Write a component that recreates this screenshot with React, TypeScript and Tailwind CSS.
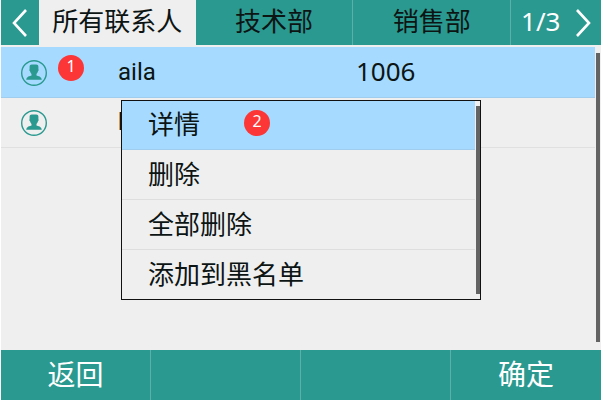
import clsx from "clsx";

const tabs = ["所有联系人", "技术部", "销售部"];

const contacts = [
  { name: "aila", number: "1006", badge: 1 },
  { name: "b", number: "", badge: null },
];

const actions = [
  { label: "详情", badge: 2 },
  { label: "删除", badge: null },
  { label: "全部删除", badge: null },
  { label: "添加到黑名单", badge: null },
];

const softKeys = ["返回", "", "", "确定"];

function Arrow({ d }: { d: string }) {
  return (
    <svg
      viewBox="0 0 16 28"
      className="h-7 w-4"
      fill="none"
      stroke="white"
      strokeWidth="2.6"
    >
      <path d={d} />
    </svg>
  );
}

function Avatar() {
  return (
    <svg viewBox="0 0 26 26" className="size-[26px] shrink-0">
      <circle
        cx="13"
        cy="13"
        r="12.3"
        fill="none"
        stroke="#2a9990"
        strokeWidth="1.4"
      />
      <path
        fill="#2a9990"
        d="M10.8 4.5h4.4c1.4 0 2.2.9 2.2 2.3v2.4c.5.5.3 1.6-.4 2-.3 1.2-.8 2.1-1.5 2.8v1.4c1.6.6 5 .9 5.3 4.4H5.2c.3-3.5 3.7-3.8 5.3-4.4V14c-.7-.7-1.2-1.6-1.5-2.8-.7-.4-.9-1.5-.4-2V6.800c0-1.400.8-2.300 2.200-2.300z"
      />
    </svg>
  );
}

function Badge({ value }: { value: number }) {
  return (
    <span className="flex size-[26px] shrink-0 items-center justify-center rounded-full bg-[#fc3637] pb-1 font-['Noto_Sans'] text-base leading-none text-white">
      {value}
    </span>
  );
}

export default function App() {
  return (
    <div className="flex min-h-screen flex-col bg-white pb-px pl-px font-['Noto_Sans_CJK_SC',sans-serif] text-[26px] leading-8 text-[#0c1414]">
      <nav className="flex h-[45px] bg-[#2a9990]">
        <button
          aria-label="上一页"
          className="flex w-[38px] shrink-0 items-center justify-center"
        >
          <Arrow d="M14 1 2 14 14 27" />
        </button>
        {tabs.map((tab, i) => (
          <button
            key={tab}
            className={clsx(
              "flex-1 pb-1.5 whitespace-nowrap",
              i === 0 ? "bg-[#efefef]" : "border-r border-[#5cb0a9]"
            )}
          >
            {tab}
          </button>
        ))}
        <div className="flex w-[90px] shrink-0 items-center justify-between px-2.5 text-white">
          <span className="pb-1 font-['Noto_Sans']">1/3</span>
          <button aria-label="下一页">
            <Arrow d="M2 1 14 14 2 27" />
          </button>
        </div>
      </nav>

      <main className="relative flex flex-1 bg-[#efefef] pt-0.5">
        <div className="flex-1">
          <table className="w-full table-fixed border-collapse text-left">
            <tbody>
              {contacts.map((contact, i) => (
                <tr
                  key={contact.name}
                  className={clsx(
                    "h-[50px] border-b",
                    i === 0
                      ? "border-[#a0cdee] bg-[#a6dbff]"
                      : "border-[#e0e0e0]"
                  )}
                >
                  <td className="w-[117px] p-0 pt-0.5 pl-5">
                    <div className="flex items-center gap-[11px]">
                      <Avatar />
                      {contact.badge && (
                        <div className="pb-2.5">
                          <Badge value={contact.badge} />
                        </div>
                      )}
                    </div>
                  </td>
                  <td className="w-[238px] p-0 font-[Roboto] text-2xl">
                    {contact.name}
                  </td>
                  <td className="p-0 pb-0.5 font-['Noto_Sans']">
                    {contact.number}
                  </td>
                </tr>
              ))}
            </tbody>
          </table>
        </div>
        <div className="w-1.5 pt-1.5 pb-2">
          <div className="ml-px h-full w-1 bg-[#636363]" />
        </div>

        <div
          role="menu"
          className="absolute top-[55px] left-1/5 flex w-3/5 border border-[#111] bg-[#efefef]"
        >
          <div className="flex-1">
            {actions.map((action) => (
              <button
                key={action.label}
                role="menuitem"
                className={clsx(
                  "flex w-full items-center gap-11 border-b pb-1 pl-[26px] text-left last:border-0",
                  action.badge
                    ? "h-[49px] border-[#a0cdee] bg-[#a6dbff]"
                    : "h-[50px] border-[#dedede] last:h-[49px]"
                )}
              >
                <span>{action.label}</span>
                {action.badge && <Badge value={action.badge} />}
              </button>
            ))}
          </div>
          <div className="w-[5px] py-[5px] pl-px">
            <div className="h-full bg-[#636363]" />
          </div>
        </div>
      </main>

      <footer className="grid h-[50px] grid-cols-4 bg-[#2a9990] text-[28px] text-white">
        {softKeys.map((key, i) => (
          <button
            key={i}
            className="border-r border-[#5cb0a9] pb-1 last:border-0"
          >
            {key}
          </button>
        ))}
      </footer>
    </div>
  );
}
